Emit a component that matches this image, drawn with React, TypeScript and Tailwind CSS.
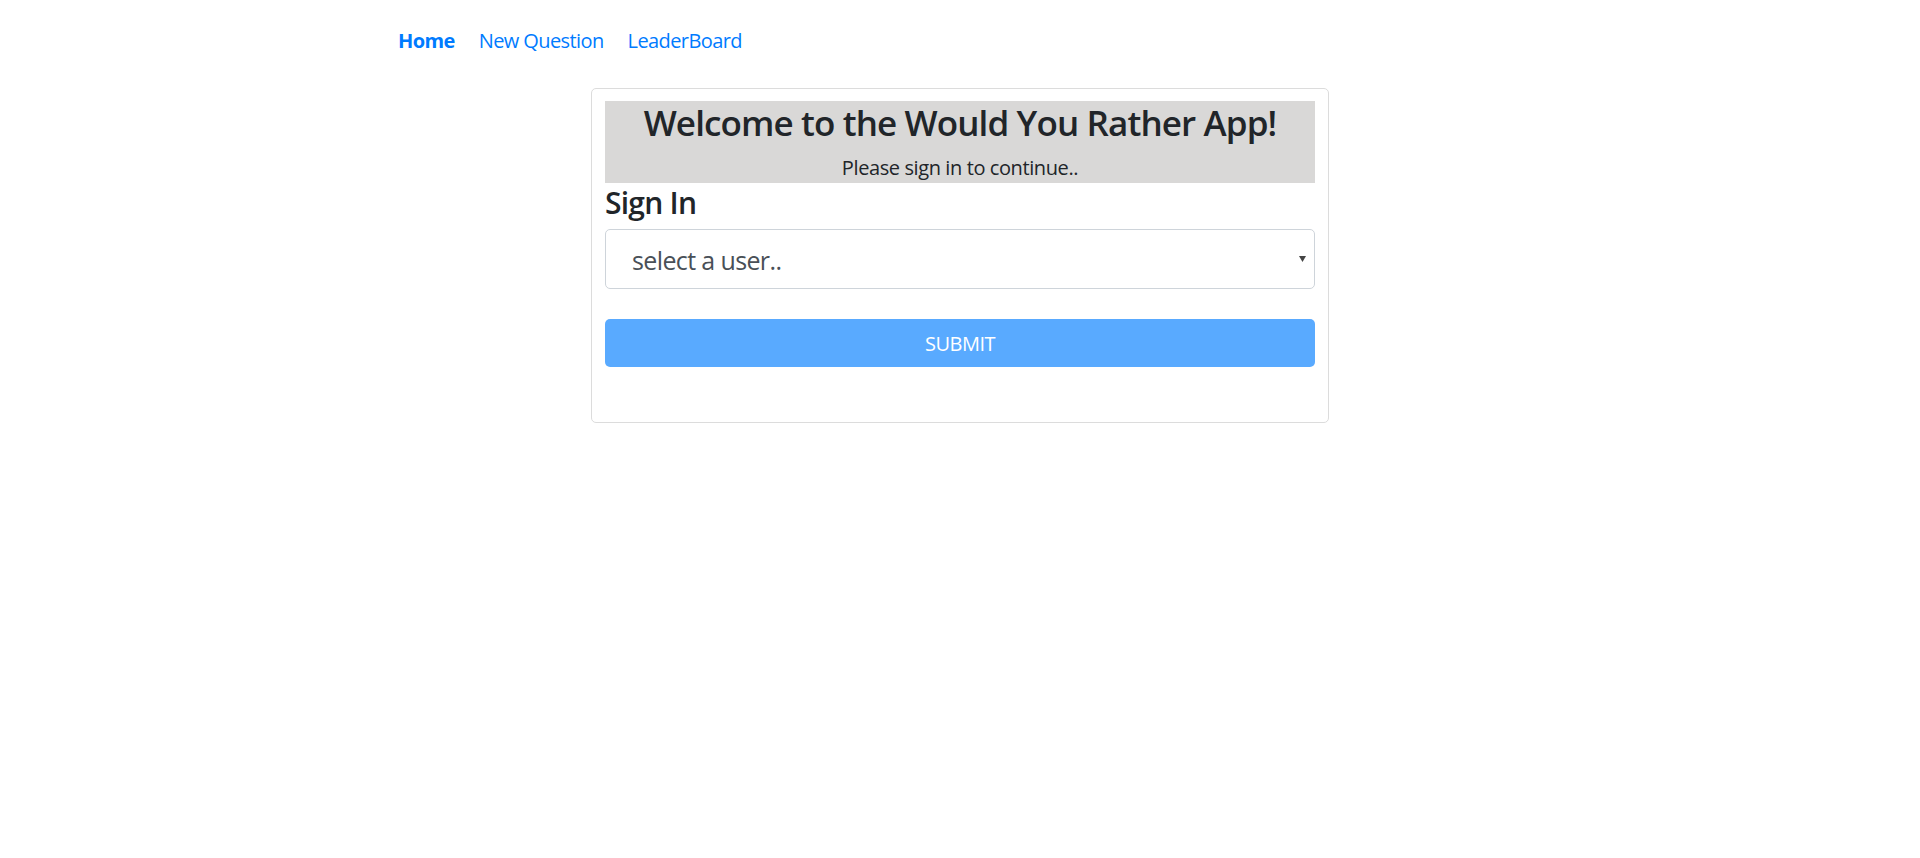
import React from "react";

const font = { fontFamily: '"Open Sans", "Noto Sans", sans-serif' };

function NavBar() {
    return (
        <nav className="w-[1124px] mx-auto pt-[26px] flex gap-[24px] text-[20px] leading-[30px] tracking-[-0.03em]">
            <a href="#" className="font-bold text-[#007bff]">Home</a>
            <a href="#" className="text-[#007bff]">New Question</a>
            <a href="#" className="text-[#007bff]">LeaderBoard</a>
        </nav>
    );
}

function SignIn() {
    return (
        <div className="w-[738px] mx-auto mt-[32px] border border-[#dcdcdc] rounded-[5px] px-[13px] pt-[12px] pb-[55px]">
            <div className="bg-[#d9d8d7] text-center text-[#212529]">
                <h3 className="text-[35px] leading-[42px] font-semibold tracking-[-0.025em] pt-[1px] mb-[9px]">
                    Welcome to the Would You Rather App!
                </h3>
                <p className="text-[20px] leading-[30px]">Please sign in to continue..</p>
            </div>
            <h4 className="text-[30px] leading-[36px] font-semibold tracking-[-0.025em] text-[#212529] pt-[2px] mb-[8px]">
                Sign In
            </h4>
            <div className="relative">
                <select
                    defaultValue=""
                    className="w-full h-[60px] appearance-none bg-white border border-[#ced4da] rounded-[5px] pl-[26px] pt-[3px] text-[25px] tracking-[-0.025em] text-[#495057] outline-none"
                    style={font}
                >
                    <option value="" disabled>
                        select a user..
                    </option>
                </select>
                <svg
                    className="absolute right-[9px] top-[27px] pointer-events-none"
                    width="7"
                    height="6"
                    viewBox="0 0 7 6"
                >
                    <path d="M0 0 H7 L3.5 6 Z" fill="#444" />
                </svg>
            </div>
            <button
                disabled
                className="mt-[30px] w-full h-[48px] pt-[2px] rounded-[5px] bg-[#59aaff] text-white text-[20px] tracking-[-0.025em] uppercase"
                style={font}
            >
                Submit
            </button>
        </div>
    );
}

export default function App() {
    return (
        <div className="min-h-[858px] bg-white tracking-[-0.025em]" style={font}>
            <NavBar />
            <SignIn />
        </div>
    );
}
